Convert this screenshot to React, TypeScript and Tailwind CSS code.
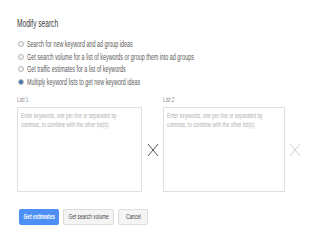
import type { ReactNode } from 'react'
import { clsx } from 'clsx'

const options = [
  'Search for new keyword and ad group ideas',
  'Get search volume for a list of keywords or group them into ad groups',
  'Get traffic estimates for a list of keywords',
  'Multiply keyword lists to get new keyword ideas',
]

function Narrow({ children, center }: { children: ReactNode; center?: boolean }) {
  return (
    <span
      className={clsx(
        'inline-block whitespace-nowrap scale-x-[0.6]',
        center ? 'origin-center' : 'origin-left'
      )}
    >
      {children}
    </span>
  )
}

function Radio({ checked }: { checked?: boolean }) {
  return (
    <span className="flex h-[6px] w-[6px] shrink-0 items-center justify-center rounded-full border border-[#b5b5b5] bg-[#f2f2f2]">
      {checked && <span className="h-[4px] w-[4px] rounded-full bg-[#3c6ea6]" />}
    </span>
  )
}

function Cross({ light }: { light?: boolean }) {
  return (
    <svg width="12" height="14" viewBox="0 0 12 14" className="shrink-0">
      <path
        d="M1 1 L11 13 M11 1 L1 13"
        stroke={light ? '#d0d0d0' : '#555'}
        strokeWidth="1"
        fill="none"
      />
    </svg>
  )
}

function KeywordList({ label, width }: { label: string; width: string }) {
  return (
    <div className="flex flex-col">
      <div className="h-[11px] text-[8px] leading-[11px] text-[#8a8a8a]">
        <Narrow>{label}</Narrow>
      </div>
      <div
        className={clsx(
          'mt-[2px] h-[85px] border border-[#e0e0e0] px-[3px] pt-[3px] text-[8px] leading-[9px] text-[#b0b0b0]',
          width
        )}
      >
        <div>
          <Narrow>Enter keywords, one per line or separated by</Narrow>
        </div>
        <div>
          <Narrow>commas, to combine with the other list(s).</Narrow>
        </div>
      </div>
    </div>
  )
}

export default function App() {
  return (
    <div
      className="flex h-[240px] w-[320px] flex-col overflow-hidden bg-white pl-[17px] pt-[17px]"
      style={{ fontFamily: '"Liberation Sans", Arial, sans-serif' }}
    >
      <div className="h-[13px] text-[11px] leading-[13px] text-[#3a3a3a]">
        <Narrow>Modify search</Narrow>
      </div>

      <div className="mt-[8px] flex flex-col">
        {options.map((opt, i) => (
          <div key={opt} className="flex h-[12.5px] items-center gap-[3px] pl-[1px]">
            <Radio checked={i === 3} />
            <span className="text-[9px] leading-[12px] text-[#5a5a5a]">
              <Narrow>{opt}</Narrow>
            </span>
          </div>
        ))}
      </div>

      <div className="mt-[6px] flex items-start">
        <KeywordList label="List 1" width="w-[125px]" />
        <div className="flex h-[98px] w-[21px] items-center justify-center pt-[13px]">
          <Cross />
        </div>
        <KeywordList label="List 2" width="w-[122px]" />
        <div className="flex h-[98px] w-[20px] items-center justify-center pt-[13px]">
          <Cross light />
        </div>
      </div>

      <div className="mt-[17px] flex gap-[4px] pl-[2px] text-[8px]">
        <button className="flex h-[16px] w-[40px] items-center justify-center rounded-[2px] bg-[#4d8ff5] font-bold text-white">
          <Narrow center>Get estimates</Narrow>
        </button>
        <button className="flex h-[16px] w-[51px] items-center justify-center rounded-[2px] border border-[#dcdcdc] bg-[#f4f4f4] text-[#444]">
          <Narrow center>Get search volume</Narrow>
        </button>
        <button className="flex h-[16px] w-[30px] items-center justify-center rounded-[2px] border border-[#dcdcdc] bg-[#f4f4f4] text-[#444]">
          <Narrow center>Cancel</Narrow>
        </button>
      </div>
    </div>
  )
}
